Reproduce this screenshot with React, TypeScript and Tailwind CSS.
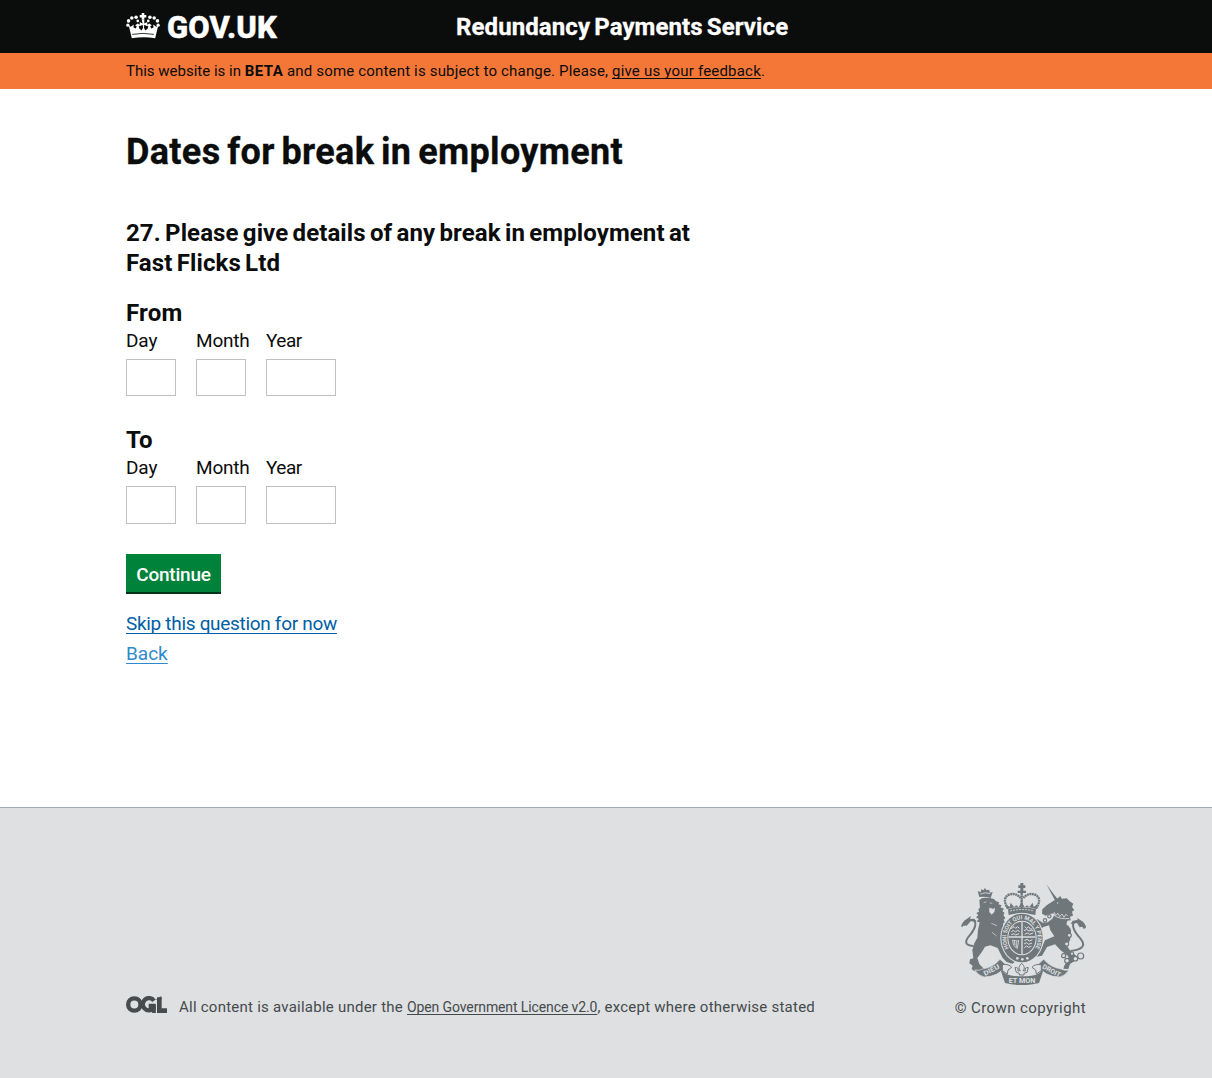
import React from 'react';

function Crown() {
  return (
    <svg className="block h-[26px] w-[34px]" viewBox="20 38 102 79" fill="#fff" aria-hidden="true">
      <path d="M67 38h8v6h6v8h-6v6h-8v-6h-6v-8h6z" />
      <path d="M67 58h8v12l9-5v13l-9-4-1 9 4 8 7-5 2-8-5-3 8-5 8 5-5 3 3 7 7-3-1-9 9 7 6-3-9 38q-35-7-71 0l-9-38 6 3 9-7-1 9 7 3 3-7-5-3 8-5 8 5-5 3 2 8 7 5 4-8-1-9-9 4V65l9 5z" />
      <circle cx="50" cy="51" r="5.4" />
      <circle cx="92" cy="51" r="5.4" />
      <circle cx="55" cy="62" r="4" />
      <circle cx="87" cy="62" r="4" />
      <circle cx="37" cy="53" r="5.4" />
      <circle cx="105" cy="53" r="5.4" />
      <circle cx="27" cy="62" r="5.4" />
      <circle cx="115" cy="62" r="5.400" />
      <circle cx="25" cy="75" r="5" />
      <circle cx="117" cy="75" r="5" />
      <path d="M38 103q33-6 66 0" stroke="#0b0c0c" strokeWidth="2.5" fill="none" />
    </svg>
  );
}

function Ogl() {
  return (
    <svg className="block h-[17px] w-[41px]" viewBox="0 0 123 51" fill="none" stroke="#484b4e" strokeWidth="13" aria-hidden="true">
      <circle cx="25" cy="25.5" r="18.5" />
      <path d="M84 14a18.500 18.500 0 1 0-2 24V30H68" />
      <path d="M84 25v26" strokeWidth="11" />
      <path d="M100 4V44h23" strokeWidth="14" />
      <path d="M89 12L106 0V12z" fill="#484b4e" stroke="none" />
    </svg>
  );
}

function Crest() {
  const ink = '#6f777b';
  const paper = '#dee0e2';
  return (
    <svg className="block h-[102px] w-[125px]" viewBox="33 24 375 306" fill={ink} aria-hidden="true">
      <defs>
        <path id="garter" d="M187 233A47 56 0 1 1 245 233" />
      </defs>

      {/* lion */}
      <path d="M88 66l-5-18 9 4 2-9 8 3 2-8 6 8 8-2 1 9 9-2-6 18q-17-5-34-3z" />
      <path d="M91 57q16-7 29-1" stroke={paper} strokeWidth="2.500" fill="none" />
      <path d="M88 76l7-6 10-2 15 1 12 3 6 7 10 3-3 6 10 3-4 6 11 4-5 7 7 6-4 6 6 9-5 5 3 8-5 4 3 26-6 24 13 18 3 25 15 7 8 14-8 6-17-5-12-12-15-30-22-8-16 4-10 17-13 17 6 18 14 15 11-2 4 9-10 7-13-2-13-10-8 5-8-7 3-10-10-7 2-12 10-3-3-25 6-20 9-17 2-24 5-22-9-2 6-8-8-5 7-6-6-7 8-4-2-8 5-4z" />
      <path d="M119 99l10 4 5-3-2 11-7 7-6-7zM101 83l9-3M119 84l8 1" stroke={paper} strokeWidth="2" fill={paper} />
      <path d="M124 145l17 7M126 172l14 11" stroke={paper} strokeWidth="2" fill="none" />
      <path d="M71 213C38 212 47 194 61 179 77 160 83 137 66 135 51 133 45 146 40 151" stroke={ink} strokeWidth="6" fill="none" />
      <path d="M33 154q5-15 17-22l13-9-3 9 12-1 8 7-18 1-12 13-9-1-4 5z" />

      {/* royal crown */}
      <path d="M211 24h9v7h6v8h-6v8h8v7h-25v-7h8v-8h-6v-8h6z" />
      <path d="M174 101q-20-31 3-42 20-7 35 10M258 101q20-31-3-42-20-7-35 10" stroke={ink} strokeWidth="7" strokeDasharray="6 1.500" fill="none" />
      <path d="M215 54v50" stroke={ink} strokeWidth="7" strokeDasharray="6 1" />
      <path d="M171 102l-3-14 11 8 3-13 10 13 7-5 7 6 9-16 9 16 7-6 7 5 10-13 3 13 11-8-3 14q-43-13-88 0z" />
      <path d="M174 103q42-13 84 0l-2 17q-40-10-80 0z" />
      <path d="M180 108q36-9 72 0" stroke={paper} strokeWidth="2.500" strokeDasharray="6 3" fill="none" />

      {/* unicorn */}
      <path d="M290 29l34 45-8 4z" />
      <path d="M324 69l7-6 4 8 15-1 9 9 11 7-4 10 7 9-7 5 3 12-9 3 2 11-10 1-3 11q17 11 14 30l-3 18-9 17 9 13 19 17-6 16-13 8-5 15-15-1 4-12 13-14-3-12-22-17-17-18-24 8-15 26-17 3-3-10 15-8 14-31 28-12-12-18-4-15-17 5-20 16 6 11-10 3-16-16 4-11 15-9-11-7 2-9 12-1 16 10 15-1 14-11 8-16-17 2-11 5-11-6 1-13 14-13z" />
      <path d="M309 119q22 16 49 11" fill="none" stroke={paper} strokeWidth="2.500" />
      <path d="M313 112l4 9 7-6 5 10 7-8 6 10 6-9 5 5" fill="none" stroke={paper} strokeWidth="2.500" />
      <circle cx="323" cy="84" r="2" fill={paper} />
      <path d="M362 228C389 225 413 216 391 190 371 170 360 143 379 139 394 137 401 149 407 157" stroke={ink} strokeWidth="6" fill="none" />
      <path d="M407 160q-2-19-15-24l-10-7 1 7-15 1-6 10 19-3 8 13 8-2 3 6z" />
      <g fill={paper} stroke={ink} strokeWidth="3.500">
        <circle cx="298" cy="124" r="5" />
        <circle cx="285" cy="136" r="5" />
        <circle cx="358" cy="181" r="6" />
        <circle cx="350" cy="207" r="6" />
        <circle cx="341" cy="242" r="6" />
        <circle cx="351" cy="257" r="7" />
        <circle cx="376" cy="251" r="7" />
        <circle cx="392" cy="243" r="9" />
        <circle cx="366" cy="236" r="5" />
      </g>

      {/* garter and shield */}
      <ellipse cx="216" cy="189" rx="65" ry="76" fill={paper} />
      <ellipse cx="216" cy="189" rx="62" ry="73" />
      <ellipse cx="216" cy="189" rx="44" ry="52" fill={paper} />
      <ellipse cx="216" cy="189" rx="41" ry="49" />
      <text fill={paper} fontFamily="Roboto, sans-serif" fontSize="17" fontWeight="700">
        <textPath href="#garter" startOffset="50%" textAnchor="middle">HONI SOIT QUI MAL Y PENSE</textPath>
      </text>
      <path d="M216 140v98M176 186h80" stroke={paper} strokeWidth="4" />
      <path d="M184 161l8-6 5 5 6-5 5 5M184 170l7-4 5 5 7-5 6 4M184 179l8-3 5 4 10-4M224 155l6 5 6-5 5 7 6 0M222 167l8-4 7 5 9-3 5 4M224 178l8-4 7 4 10-4M223 197l8-4 7 5 9-4M222 207l8-4 6 5 10-4M223 218l7-5 6 4 8-3" stroke={paper} strokeWidth="3" fill="none" />
      <path d="M188 195q17 5 18 1l-4 24q-13-4-14-25zM193 198l2 13M199 199v17" stroke={paper} strokeWidth="2.500" fill="none" />
      <g fill={paper}>
        <circle cx="202" cy="250" r="4" />
        <circle cx="217" cy="253" r="4" />
        <circle cx="232" cy="250" r="4" />
      </g>

      {/* scroll */}
      <path d="M74 285q14 3 24-3 32-5 52-29l20 18q-24 34-67 35-17-3-29-21z" stroke={paper} strokeWidth="2" />
      <path d="M357 285q-14 3-24-3-32-5-52-29l-20 18q24 34 67 35 17-3 29-21z" stroke={paper} strokeWidth="2" />
      <path d="M157 269q20-3 28 8l-11 8-2 12-15-10zM274 269q-20-3-28 8l11 8 2 12 15-10z" fill={paper} stroke={ink} strokeWidth="3" />
      <path d="M158 281q-3 9 9 15 17 8 49 8t49-8q12-6 9-15l5 8-12 35q-51 13-102 0l-12-35z" />
      <path d="M215 265q14 13 4 22l7 1q-2-13 9-10l-4 14-9 3v5h-14v-5l-9-3-4-14q11-3 9 10l7-1q-10-9 4-22z" fill={paper} stroke={ink} strokeWidth="3" />
      <g fill={paper} fontFamily="Roboto, sans-serif" fontWeight="700">
        <text x="105" y="303" fontSize="20" textLength="51" lengthAdjust="spacingAndGlyphs" transform="rotate(-28 105 303)">DIEU</text>
        <text x="176" y="324" fontSize="23" textLength="80" lengthAdjust="spacingAndGlyphs">ET MON</text>
        <text x="275" y="279" fontSize="20" textLength="60" lengthAdjust="spacingAndGlyphs" transform="rotate(28 275 279)">DROIT</text>
      </g>
    </svg>
  );
}

function DateFields({ legend, tall = false }: { legend: string; tall?: boolean }) {
  const input = tall
    ? 'mt-1.5 block h-[38px] w-full border border-[#bfc1c3] bg-white'
    : 'mt-1.5 block h-[37px] w-full border border-[#bfc1c3] bg-white';
  return (
    <fieldset>
      <legend className="block text-[24px] leading-[30px] font-bold tracking-[0.2px]">{legend}</legend>
      <div className="flex gap-5">
        <label className="w-[50px]">
          <span className="block text-[19px] leading-[25px] tracking-[-0.1px]">Day</span>
          <input className={input} />
        </label>
        <label className="w-[50px]">
          <span className="block text-[19px] leading-[25px] tracking-[-0.2px]">Month</span>
          <input className={input} />
        </label>
        <label className="w-[70px]">
          <span className="block text-[19px] leading-[25px] tracking-[-0.5px]">Year</span>
          <input className={input} />
        </label>
      </div>
    </fieldset>
  );
}

export default function App() {
  return (
    <div className="flex h-[1078px] w-full flex-col bg-white font-['Roboto',sans-serif] text-[#0b0c0c]">
      <header className="h-[53px] bg-[#0b0c0c] text-white">
        <div className="mx-auto flex w-[960px] items-start">
          <a href="#" className="flex w-[330px] items-start">
            <span className="mt-[13px]"><Crown /></span>
            <span className="mt-[10px] ml-[7px] text-[31px] leading-[35px] font-extrabold tracking-[0.2px] [-webkit-text-stroke:0.5px_white]">GOV.UK</span>
          </a>
          <span className="mt-[12px] text-[24px] leading-[30px] font-bold tracking-[0.1px] [word-spacing:-2px] [-webkit-text-stroke:0.3px_white]">Redundancy Payments Service</span>
        </div>
      </header>

      <div className="h-[36px] bg-[#f47738]">
        <p className="mx-auto w-[960px] pt-[6px] text-[15px] leading-[25px] whitespace-nowrap">
          This website is in <strong className="tracking-[0.45px]">BETA</strong>{' '}
          <span className="tracking-[0.17px]">and some content is subject to change. Please, </span>
          <a href="#" className="tracking-[0.2px] underline decoration-1 underline-offset-[2px] [text-decoration-skip-ink:none]">give us your feedback</a>.
        </p>
      </div>

      <main className="mx-auto w-[960px] grow pt-[43px]">
        <h1 className="text-[36px] leading-[40px] font-bold tracking-[0.34px] [word-spacing:-2.5px] [-webkit-text-stroke:0.3px_#0b0c0c]">Dates for break in employment</h1>
        <h2 className="mt-[46px] text-[24px] leading-[30px] font-bold tracking-[0.1px] [word-spacing:-1.8px]">
          27. Please give details of any break in employment at
          <br />
          Fast Flicks Ltd
        </h2>
        <form className="mt-5">
          <DateFields legend="From" />
          <div className="mt-[29px]">
            <DateFields legend="To" tall />
          </div>
          <button type="button" className="mt-[30px] block h-[40px] w-[95px] border-b-2 border-[#003618] bg-[#00823b] pt-[4px] text-center text-[19px] font-medium tracking-[-0.2px] text-white">
            Continue
          </button>
        </form>
        <div className="mt-[15px] text-[19px] leading-[30px]">
          <a href="#" className="block w-fit tracking-[-0.31px] text-[#005ea5] underline decoration-1 underline-offset-[3px] [text-decoration-skip-ink:none]">
            Skip this question for now
          </a>
          <a href="#" className="block w-fit text-[#2e8aca] underline decoration-1 underline-offset-[3px] [text-decoration-skip-ink:none]">
            Back
          </a>
        </div>
      </main>

      <footer className="h-[271px] border-t border-[#a1acb2] bg-[#dee0e2] text-[#454a4c]">
        <div className="mx-auto flex w-[960px] items-end justify-between pt-[75px]">
          <div className="mb-px flex items-start">
            <span className="mt-px"><Ogl /></span>
            <p className="ml-3 text-[15px] leading-[24px] whitespace-nowrap tracking-[0.24px]">
              All content is available under the{' '}
              <a href="#" className="text-[14px] tracking-[-0.11px] underline decoration-1 underline-offset-[2px] [text-decoration-skip-ink:none]">Open Government Licence v2.0</a>
              , except where otherwise stated
            </p>
          </div>
          <div className="flex flex-col items-end">
            <Crest />
            <p className="mt-[11px] text-[15px] leading-[24px] tracking-[0.42px]">© Crown copyright</p>
          </div>
        </div>
      </footer>
    </div>
  );
}
